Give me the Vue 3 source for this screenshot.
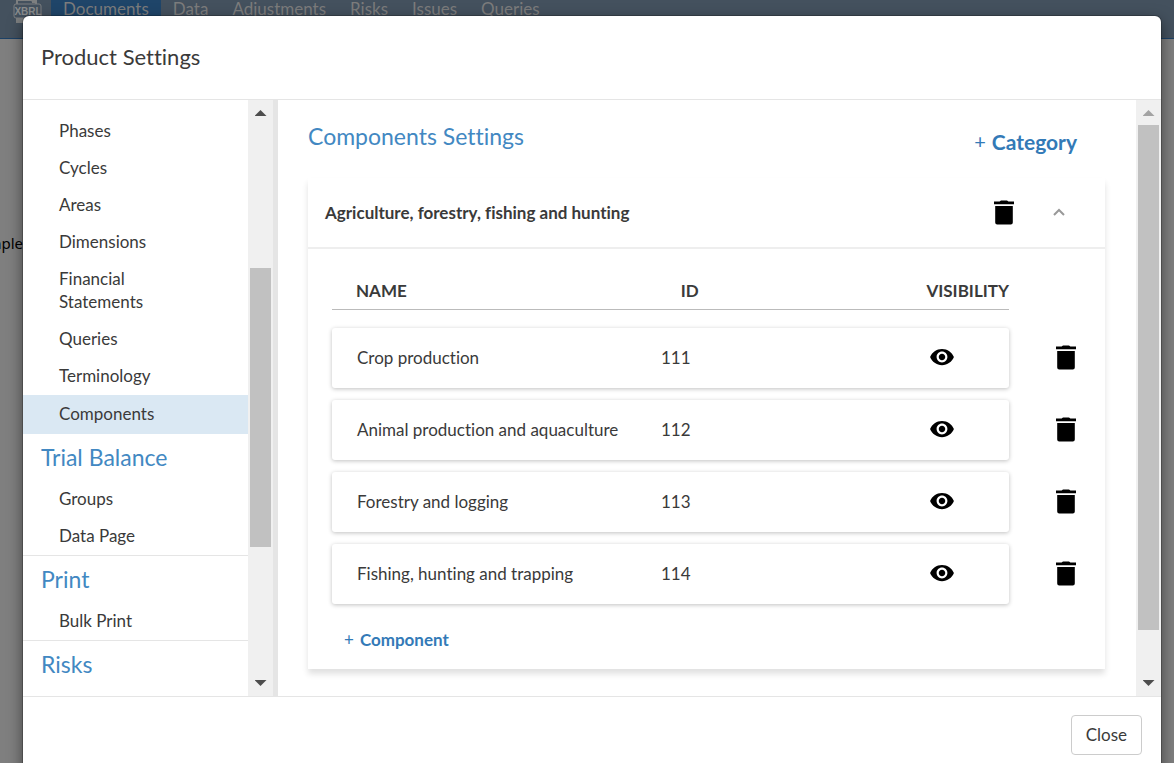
<script setup>
import { ref } from 'vue'

const tabs = ['Documents', 'Data', 'Adjustments', 'Risks', 'Issues', 'Queries']

const sections = [
  {
    title: '',
    items: ['Phases', 'Cycles', 'Areas', 'Dimensions', 'Financial Statements', 'Queries', 'Terminology', 'Components'],
  },
  { title: 'Trial Balance', items: ['Groups', 'Data Page'], divided: true },
  { title: 'Print', items: ['Bulk Print'], divided: true },
  { title: 'Risks', items: [] },
]
const active = ref('Components')

const components = ref([
  { name: 'Crop production', id: '111' },
  { name: 'Animal production and aquaculture', id: '112' },
  { name: 'Forestry and logging', id: '113' },
  { name: 'Fishing, hunting and trapping', id: '114' },
])
</script>

<template>
  <div class="page">
    <header class="topbar">
      <svg class="logo" width="30" height="28" viewBox="0 0 30 28" aria-hidden="true">
        <path d="M5 5V0h14l5 3v2" fill="none" stroke="#7d7f80" stroke-width="2" />
        <path d="M20 0h5v3h-5z" fill="#7d7f80" />
        <rect x="2" y="4" width="27" height="14" rx="2" fill="#44515e" stroke="#7d7f80" stroke-width="1" />
        <path d="M4 18h21v5H4z" fill="#7d7f80" />
        <text x="16" y="15" text-anchor="middle" class="logo-text">XBRL</text>
      </svg>
      <nav class="tabs">
        <a v-for="(tab, i) in tabs" :key="tab" href="#" class="tab" :class="{ current: i === 0 }">{{ tab }}</a>
      </nav>
    </header>
    <main class="backdrop-text">mple</main>

    <section class="modal" role="dialog" aria-labelledby="dialog-title">
      <header class="modal-header">
        <h1 id="dialog-title">Product Settings</h1>
      </header>

      <div class="modal-body">
        <nav class="sidebar">
          <div v-for="(section, i) in sections" :key="i" class="section" :class="{ divided: section.divided }">
            <h2 v-if="section.title" class="section-title">{{ section.title }}</h2>
            <a
              v-for="item in section.items"
              :key="item"
              href="#"
              class="item"
              :class="{ active: item === active }"
              @click.prevent="active = item"
            ><span>{{ item }}</span></a>
          </div>
        </nav>
        <div class="scrollbar side-bar" aria-hidden="true">
          <i class="arrow up"></i>
          <div class="track"><div class="thumb"></div></div>
          <i class="arrow down"></i>
        </div>

        <div class="content">
          <div class="content-head">
            <h2>Components Settings</h2>
            <button type="button" class="add add-category"><span class="plus">+</span> Category</button>
          </div>

          <article class="card">
            <header class="card-head">
              <h3>Agriculture, forestry, fishing and hunting</h3>
              <button type="button" class="icon" aria-label="Delete category">
                <svg width="20" height="25" viewBox="0 0 20 25">
                  <path d="M0 1.600h5.600L7 .6h6l1.400 1H20v2.600H0zM1.200 6h17.600v16.500q0 2-2 2H3.200q-2 0-2-2z" />
                </svg>
              </button>
              <button type="button" class="icon chevron" aria-label="Collapse">
                <svg width="12" height="8" viewBox="0 0 12 8">
                  <path d="M1 7l5-5 5 5" fill="none" stroke="#999" stroke-width="2" />
                </svg>
              </button>
            </header>

            <table class="list">
              <thead>
                <tr>
                  <th scope="col">NAME</th>
                  <th scope="col">ID</th>
                  <th scope="col">VISIBILITY</th>
                </tr>
              </thead>
              <tbody>
                <tr v-for="c in components" :key="c.id">
                  <td class="name">{{ c.name }}</td>
                  <td>{{ c.id }}</td>
                  <td>
                    <button type="button" class="icon" :aria-label="'Toggle visibility of ' + c.name">
                      <svg width="26" height="26" viewBox="0 0 24 24">
                        <path d="M12 4.500C7 4.500 2.730 7.610 1 12c1.730 4.390 6 7.500 11 7.500s9.270-3.110 11-7.500c-1.730-4.390-6-7.500-11-7.500zM12 17c-2.760 0-5-2.240-5-5s2.240-5 5-5 5 2.240 5 5-2.240 5-5 5zm0-8c-1.660 0-3 1.340-3 3s1.340 3 3 3 3-1.340 3-3-1.340-3-3-3z" />
                      </svg>
                    </button>
                  </td>
                  <td class="remove">
                    <button type="button" class="icon" :aria-label="'Delete ' + c.name">
                      <svg width="20" height="25" viewBox="0 0 20 25">
                        <path d="M0 1.600h5.600L7 .6h6l1.400 1H20v2.600H0zM1.200 6h17.600v16.500q0 2-2 2H3.200q-2 0-2-2z" />
                      </svg>
                    </button>
                  </td>
                </tr>
              </tbody>
            </table>

            <button type="button" class="add add-component"><span class="plus">+</span> Component</button>
          </article>
        </div>
        <div class="scrollbar main-bar" aria-hidden="true">
          <i class="arrow up"></i>
          <div class="track"><div class="thumb"></div></div>
          <i class="arrow down"></i>
        </div>
      </div>

      <footer class="modal-footer">
        <button type="button" class="close">Close</button>
      </footer>
    </section>
  </div>
</template>

<style>
body {
  background: #7f7f7f;
}
</style>

<style scoped>
* {
  box-sizing: border-box;
}
.page {
  position: relative;
  height: 100vh;
  overflow: hidden;
  background: #7f7f7f;
  font-family: Lato, "Liberation Sans", sans-serif;
  font-size: 17px;
  line-height: 23px;
  font-variant-ligatures: none;
  color: #3a3a3a;
}
h1, h2, h3 {
  margin: 0;
  font-weight: 400;
}
button {
  font: inherit;
  color: inherit;
  background: none;
  border: 0;
  padding: 0;
  cursor: pointer;
}
a {
  color: inherit;
  text-decoration: none;
}

.topbar {
  display: flex;
  height: 39px;
  padding-left: 12px;
  background: #44515e;
  border-bottom: 1px solid #1c4166;
}
.logo {
  margin-right: 9px;
}
.logo-text {
  font: 700 10px "Liberation Sans", sans-serif;
  fill: #8a8c8d;
}
.tabs {
  display: flex;
  line-height: 17px;
  color: #7c7c7c;
}
.tab {
  padding: 0 12px;
}
.tab.current {
  background: #1f4569;
}
.backdrop-text {
  width: 23px;
  margin-top: 193px;
  display: flex;
  justify-content: flex-end;
  overflow: hidden;
  font: 15px/23px "Noto Sans", sans-serif;
  color: #000;
}

.modal {
  position: absolute;
  inset: 16px 13px -12px 23px;
  display: flex;
  flex-direction: column;
  background: #fff;
  border-radius: 6px;
  box-shadow: 0 0 0 1px rgba(0, 0, 0, 0.2), 0 5px 15px rgba(0, 0, 0, 0.5);
}
.modal-header {
  padding: 27px 18px 28px;
  border-bottom: 1px solid #e5e5e5;
}
h1 {
  font-size: 22px;
  line-height: 28px;
}
.modal-body {
  flex: 1;
  min-height: 0;
  display: flex;
}
.sidebar {
  width: 225px;
  padding-top: 13px;
  overflow: hidden;
}
.divided {
  border-bottom: 1px solid #e5e5e5;
}
.section-title {
  padding: 0 18px;
  font-size: 23px;
  line-height: 47px;
  color: #4288c2;
}
.item {
  display: block;
  padding: 6px 36px 8px;
}
.item span {
  display: block;
  max-width: 120px;
}
.item.active {
  padding: 7px 36px 9px;
  background: #dae8f3;
}

.scrollbar {
  width: 25px;
  flex: none;
  display: flex;
  flex-direction: column;
  background: #f0f0f0;
}
.side-bar {
  width: 30px;
  border-right: 5px solid #e5e5e5;
}
.track {
  flex: 1;
  padding: 0 2px;
  display: flex;
}
.thumb {
  flex: 1;
  background: #c1c1c1;
}
.side-bar .track {
  padding: 143px 2px 123px;
}
.main-bar .track {
  padding-bottom: 40px;
}
.arrow {
  width: 12px;
  height: 6px;
  margin: 10px auto 9px;
  background: #4d4d4d;
}
.up {
  clip-path: polygon(50% 0, 100% 100%, 0 100%);
}
.down {
  margin: 10px auto;
  clip-path: polygon(0 0, 100% 0, 50% 100%);
}
.main-bar .up {
  background: #a3a3a3;
}

.content {
  flex: 1;
  min-width: 0;
  padding: 20px 31px 0 30px;
}
.content-head {
  display: flex;
  justify-content: space-between;
  height: 58px;
  padding-right: 28px;
}
.content-head h2 {
  font-size: 23px;
  line-height: 32px;
  color: #4288c2;
}
.add {
  display: flex;
  gap: 6px;
  align-items: center;
  font-weight: 700;
  color: #337ab7;
}
.plus {
  font-weight: 400;
}
.add-category {
  height: 42px;
  font-size: 21px;
}
.add-category .plus {
  font-size: 20px;
}
.card {
  padding-bottom: 18px;
  box-shadow: 0 5px 6px rgba(0, 0, 0, 0.12);
}
.card-head {
  display: flex;
  align-items: center;
  height: 71px;
  padding: 0 40px 0 17px;
  border-bottom: 2px solid #eee;
}
h3 {
  flex: 1;
  font-size: 17px;
  font-weight: 700;
}
.icon {
  display: flex;
}
.icon svg {
  display: block;
}
.chevron {
  margin-left: 39px;
  padding-bottom: 2px;
}

.list {
  display: block;
  margin: 24px 96px 0 24px;
}
thead, tbody {
  display: block;
}
tr {
  display: grid;
  align-items: center;
}
thead tr {
  grid-template-columns: 349fr 246fr 82fr;
  height: 37px;
  border-bottom: 1px solid #bbb;
}
th {
  padding: 0 0 2px;
  text-align: left;
  font-weight: 700;
}
th:first-child {
  padding-left: 24px;
}
th:last-child {
  justify-self: end;
}
tbody tr {
  grid-template-columns: 329fr 268fr 80fr 0;
  height: 60px;
  margin-bottom: 12px;
  border-radius: 3px;
  box-shadow: 0 1px 4px rgba(0, 0, 0, 0.25);
}
tbody tr:first-child {
  margin-top: 18px;
}
td {
  padding: 0 0 2px;
}
.name {
  padding-left: 25px;
}
.remove {
  padding-left: 47px;
}
.add-component {
  height: 24px;
  margin: 23px 0 0 36px;
}

.modal-footer {
  display: flex;
  justify-content: flex-end;
  padding: 18px 19px 20px;
  border-top: 1px solid #e5e5e5;
}
.close {
  height: 40px;
  padding: 0 14px 2px;
  border: 1px solid #ccc;
  border-radius: 4px;
}
</style>
